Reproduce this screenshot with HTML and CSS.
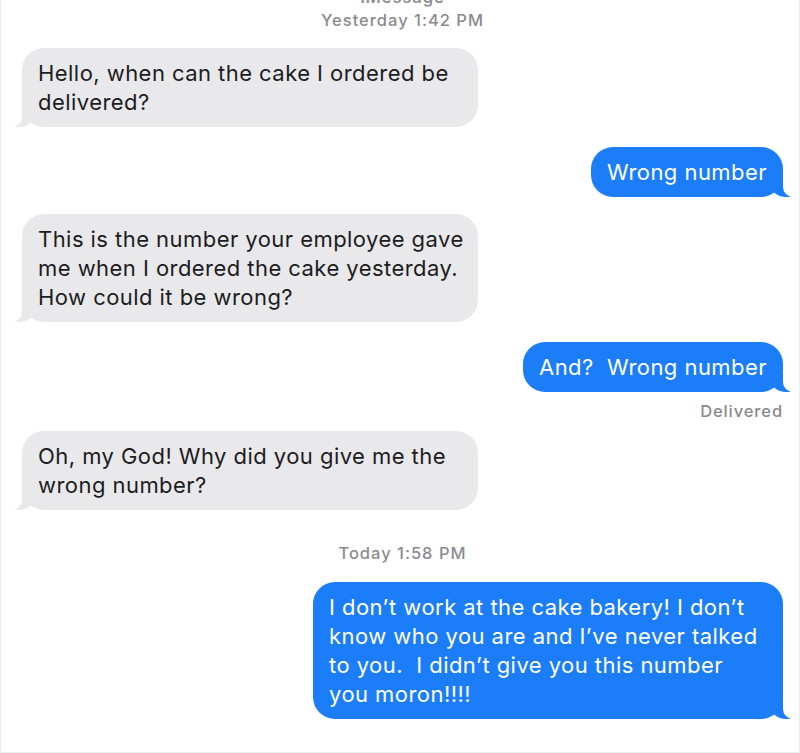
FILE: index.html
```html
<!DOCTYPE html>
<html lang="en">
<head>
<meta charset="utf-8">
<title>Messages</title>
<link rel="stylesheet" href="styles.css">
</head>
<body>
<div class="screen">
  <div class="service">iMessage</div>
  <div class="stamp">Yesterday 1:42 PM</div>

  <div class="bubble them b1">Hello, when can the cake I ordered be<br>delivered?</div>
  <div class="bubble me b2">Wrong number</div>
  <div class="bubble them b3">This is the number your employee gave<br>me when I ordered the cake yesterday.<br>How could it be wrong?</div>
  <div class="bubble me b4">And?&nbsp; Wrong number</div>
  <div class="status">Delivered</div>
  <div class="bubble them b5">Oh, my God! Why did you give me the<br>wrong number?</div>

  <div class="stamp today">Today 1:58 PM</div>
  <div class="bubble me b6">I don’t work at the cake bakery! I don’t<br>know who you are and I’ve never talked<br>to you.&nbsp; I didn’t give you this number<br>you moron!!!!</div>
</div>
</body>
</html>
```

FILE: styles.css
```css
* { box-sizing: border-box; }
html, body { margin: 0; padding: 0; background: #fff; }
body { font-family: Inter, "Helvetica Neue", "Liberation Sans", Arial, sans-serif; }

.screen {
  width: 800px;
  height: 753px;
  overflow: hidden;
  display: flex;
  flex-direction: column;
  padding: 0 16px 0 21px;
  border-left: 1px solid #ececec;
  border-right: 1px solid #ececec;
  border-bottom: 1px solid #ececec;
  background: #fff;
}

.service {
  margin-top: -13px;
  line-height: 20px;
  height: 20px;
  text-align: center;
  font-size: 16.5px;
  letter-spacing: 0.9px;
  font-weight: 600;
  color: #8e8e93;
}

.stamp {
  margin-top: 3px;
  line-height: 20px;
  text-align: center;
  font-size: 16.5px;
  letter-spacing: 1px;
  font-weight: 500;
  color: #8a8a8e;
}
.stamp.today { margin-top: 33px; }

.bubble {
  position: relative;
  font-size: 22px;
  letter-spacing: 0.45px;
  line-height: 29px;
  padding: 11px 16px 10px;
  border-radius: 22px;
  white-space: nowrap;
}

.them {
  align-self: flex-start;
  background: #e9e9eb;
  color: #1c1c1e;
  width: 456px;
}
.them::before {
  content: "";
  position: absolute;
  bottom: 0;
  left: -7px;
  width: 20px;
  height: 20px;
  background: #e9e9eb;
  border-bottom-right-radius: 16px 14px;
}
.them::after {
  content: "";
  position: absolute;
  bottom: 0;
  left: -26px;
  width: 26px;
  height: 20px;
  background: #fff;
  border-bottom-right-radius: 10px;
}

.me {
  align-self: flex-end;
  background: #1b7df7;
  color: #fff;
}
.me::before {
  content: "";
  position: absolute;
  bottom: 0;
  right: -7px;
  width: 20px;
  height: 20px;
  background: #1b7df7;
  border-bottom-left-radius: 16px 14px;
}
.me::after {
  content: "";
  position: absolute;
  bottom: 0;
  right: -26px;
  width: 26px;
  height: 20px;
  background: #fff;
  border-bottom-left-radius: 10px;
}

.b1 { margin-top: 18px; }
.b2 { margin-top: 20px; }
.b3 { margin-top: 17px; }
.b4 { margin-top: 20px; }
.b5 { margin-top: 10px; }
.b6 { margin-top: 19px; width: 470px; }

.status {
  align-self: flex-end;
  margin-top: 9px;
  line-height: 20px;
  font-size: 16.5px;
  letter-spacing: 0.9px;
  font-weight: 500;
  color: #8a8a8e;
}
```
